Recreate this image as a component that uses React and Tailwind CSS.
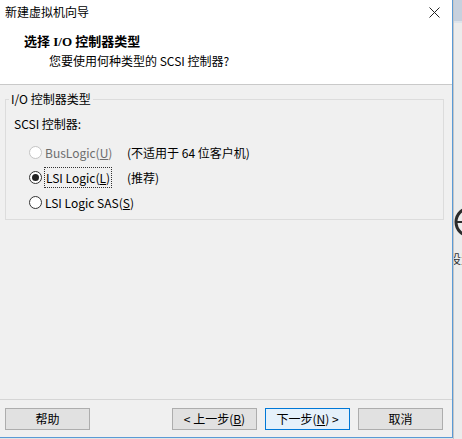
import React from "react";

const ui = { fontFamily: '"Noto Sans CJK SC", "Noto Sans", sans-serif' };
const head = { fontFamily: '"Liberation Serif", "Noto Sans CJK SC", serif' };

const Radio = ({ checked, disabled }) => (
  <span
    className={`flex items-center justify-center w-[13px] h-[13px] rounded-full border bg-white ${
      disabled ? "border-[#c4c4c4]" : "border-[#333333]"
    }`}
  >
    {checked && <span className="w-[7px] h-[7px] rounded-full bg-[#222222]" />}
  </span>
);

const Btn = ({ children, primary }) => (
  <button
    className={`w-[85px] h-[22px] text-[12px] leading-none border text-black ${
      primary ? "bg-[#e5f1fb] border-[#0078d7]" : "bg-[#e1e1e1] border-[#adadad]"
    }`}
  >
    {children}
  </button>
);

export default function App() {
  return (
    <div className="flex w-[462px] h-[439px] bg-[#e4e4e4] overflow-hidden" style={ui}>
      {/* wizard window */}
      <div className="flex flex-col w-[453px] h-[438px] shrink-0 bg-[#f0f0f0] border-r border-b border-[#5a9ad5]">
        {/* title + header */}
        <div className="bg-white border-b border-[#c9c9c9]">
          <div className="flex items-center justify-between h-[24px] pl-[5px] pr-[12px]">
            <span className="text-[12px] text-black">新建虚拟机向导</span>
            <svg width="11" height="11" viewBox="0 0 11 11">
              <path d="M0.5 0.5 L10.5 10.5 M10.5 0.5 L0.5 10.5" stroke="#222" strokeWidth="1" />
            </svg>
          </div>
          <div className="h-[60px] pt-[9px]">
            <div className="pl-[24px] text-[13px] font-bold leading-[18px] text-black" style={head}>
              选择 I/O 控制器类型
            </div>
            <div className="pl-[49px] mt-[2px] text-[12px] leading-[16px] text-black">
              您要使用何种类型的 SCSI 控制器?
            </div>
          </div>
        </div>

        {/* body */}
        <div className="flex-1 pt-[6px]">
          <fieldset className="ml-[5px] w-[439px] border border-[#dcdcdc] pl-[3px] pb-[4px]">
            <legend className="px-[2px] text-[12px] leading-[16px] text-black">I/O 控制器类型</legend>
            <div className="pl-[5px]">
              <div className="mt-[9px] text-[12px] leading-[16px] text-black">SCSI 控制器:</div>
              <div className="mt-[8px] pl-[15px] text-[12px]">
                <div className="flex items-center h-[25px]">
                  <Radio disabled />
                  <span className="ml-[2px] w-[83px] px-[1px] text-[#6d6d6d]">
                    BusLogic(<u>U</u>)
                  </span>
                  <span className="text-black">(不适用于 64 位客户机)</span>
                </div>
                <div className="flex items-center h-[25px]">
                  <Radio checked />
                  <span className="ml-[2px] w-[83px]">
                    <span className="px-[1px] py-[1px] border border-dotted border-[#333] text-black">
                      LSI Logic(<u>L</u>)
                    </span>
                  </span>
                  <span className="text-black">(推荐)</span>
                </div>
                <div className="flex items-center h-[25px]">
                  <Radio />
                  <span className="ml-[2px] px-[1px] text-black">
                    LSI Logic SAS(<u>S</u>)
                  </span>
                </div>
              </div>
            </div>
          </fieldset>
        </div>

        {/* footer */}
        <div className="h-[38px] border-t border-[#d5d5d5] flex items-start justify-between pt-[8px] pl-[5px] pr-[9px]">
          <Btn>帮助</Btn>
          <div className="flex gap-[8px]">
            <Btn>&lt; 上一步(<u>B</u>)</Btn>
            <Btn primary>下一步(<u>N</u>) &gt;</Btn>
            <Btn>取消</Btn>
          </div>
        </div>
      </div>

      {/* desktop behind */}
      <div className="flex flex-col flex-1 border-l border-[#c6c6c6] bg-[#ececec] overflow-hidden">
        <div className="h-[23px] bg-[#c7d1de] border-b-2 border-[#dde3ea]" />
        <div className="h-[183px]" />
        <svg width="9" height="32" viewBox="0 0 9 32" className="shrink-0">
          <circle cx="16" cy="16" r="14" fill="none" stroke="#2b2b2b" strokeWidth="3" />
          <path d="M2 16 H9" stroke="#2b2b2b" strokeWidth="2" />
        </svg>
        <div className="mt-[12px] -ml-[5px] text-[12px] text-[#333] whitespace-nowrap">设置</div>
      </div>
    </div>
  );
}
